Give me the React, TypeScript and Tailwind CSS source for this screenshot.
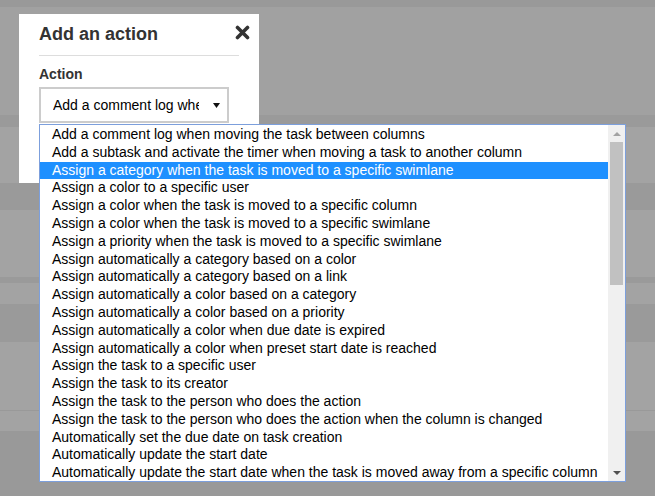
const actions = [
  "Add a comment log when moving the task between columns",
  "Add a subtask and activate the timer when moving a task to another column",
  "Assign a category when the task is moved to a specific swimlane",
  "Assign a color to a specific user",
  "Assign a color when the task is moved to a specific column",
  "Assign a color when the task is moved to a specific swimlane",
  "Assign a priority when the task is moved to a specific swimlane",
  "Assign automatically a category based on a color",
  "Assign automatically a category based on a link",
  "Assign automatically a color based on a category",
  "Assign automatically a color based on a priority",
  "Assign automatically a color when due date is expired",
  "Assign automatically a color when preset start date is reached",
  "Assign the task to a specific user",
  "Assign the task to its creator",
  "Assign the task to the person who does the action",
  "Assign the task to the person who does the action when the column is changed",
  "Automatically set the due date on task creation",
  "Automatically update the start date",
  "Automatically update the start date when the task is moved away from a specific column",
];

export default function App() {
  return (
    <div className="relative w-[655px] h-[496px] overflow-hidden bg-[#999999] font-['Liberation_Sans',Arial,sans-serif]">
      {/* board behind the overlay */}
      <div className="flex flex-col">
        <div className="h-[7px] bg-[#999999]" />
        <div className="h-[108px] bg-[#a1a1a1]" />
        <div className="h-[12px] bg-[#9a9a9a]" />
        <div className="h-[56px] bg-[#a3a3a3]" />
        <div className="h-[27px] bg-[#9a9a9a]" />
        <div className="h-[67px] bg-[#a3a3a3]" />
        <div className="h-[6px] bg-[#9a9a9a]" />
        <div className="h-[21px] bg-[#a3a3a3]" />
        <div className="h-[38px] bg-[#9a9a9a]" />
        <div className="h-[68px] bg-[#a3a3a3]" />
        <div className="h-px bg-[#999999]" />
        <div className="h-[20px] bg-[#a3a3a3]" />
      </div>

      {/* modal */}
      <div className="absolute left-[19px] top-[14px] w-[240px] h-[169px] bg-white px-5 pt-2">
        <div className="flex items-start justify-between border-b border-[#dddddd] pb-[9px]">
          <h2 className="text-[18px] leading-[24px] font-bold text-[#333333]">Add an action</h2>
          <svg className="mt-[3px] -mr-[11px]" width="15" height="15" viewBox="0 0 15 15">
            <path d="M2.5 2.5 L12.5 12.5 M12.5 2.5 L2.5 12.5" stroke="#333333" strokeWidth="3.6" strokeLinecap="round" />
          </svg>
        </div>
        <div className="mt-[10px] text-[14px] leading-4 font-bold text-[#333333]">Action</div>
        <div className="mt-[5px] flex h-[36px] w-[190px] items-center border-2 border-[#cccccc] pl-3 pr-[7px]">
          <span className="flex-1 overflow-hidden whitespace-nowrap text-[14px] text-black">Add a comment log when</span>
          <svg className="ml-[14px]" width="7" height="5" viewBox="0 0 7 5">
            <path d="M0 0 H7 L3.5 5 Z" fill="#111111" />
          </svg>
        </div>
      </div>

      {/* open dropdown list */}
      <div className="absolute left-[39px] top-[124px] flex h-[358px] w-[587px] border border-[#7c9fdc] bg-white">
        <ul className="flex-1 overflow-hidden pt-px">
          {actions.map((a, i) => (
            <li
              key={i}
              className={
                "h-[17.8px] whitespace-nowrap pl-3 text-[14px] leading-[17.8px] " +
                (i === 2 ? "bg-[#1e90ff] text-white" : "text-black")
              }
            >
              {a}
            </li>
          ))}
        </ul>
        <div className="flex w-[17px] flex-col bg-[#f0f0f0]">
          <div className="flex h-[17px] items-center justify-center">
            <svg width="8" height="4" viewBox="0 0 8 4">
              <path d="M0 4 L4 0 L8 4 Z" fill="#a3a3a3" />
            </svg>
          </div>
          <div className="flex-1">
            <div className="mx-[2px] h-[143px] bg-[#c1c1c1]" />
          </div>
          <div className="flex h-[17px] items-center justify-center">
            <svg width="8" height="4" viewBox="0 0 8 4">
              <path d="M0 0 H8 L4 4 Z" fill="#505050" />
            </svg>
          </div>
        </div>
      </div>
    </div>
  );
}
